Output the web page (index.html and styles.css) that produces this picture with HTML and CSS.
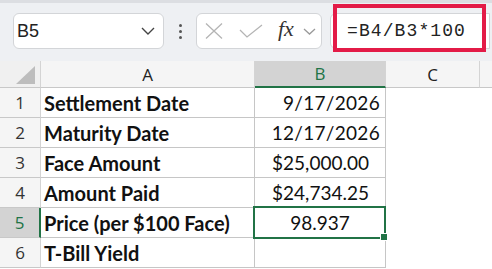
FILE: index.html
```html
<!DOCTYPE html>
<html lang="en">
<head>
    <meta charset="UTF-8">
    <meta name="viewport" content="width=device-width, initial-scale=1.0">
    <link rel="stylesheet" href="styles.css">
    <title>T-Bill Price</title>
</head>
<body>
<div class="formula-bar">
    <div class="name-box">
        <span class="name-box_text">B5</span>
        <svg class="chevron" width="14" height="8" viewBox="0 0 14 8"><path d="M1 1 L7 7 L13 1" fill="none" stroke="#444" stroke-width="1.4"/></svg>
    </div>
    <div class="dots"><span></span><span></span><span></span></div>
    <div class="fx-box">
        <svg class="icon-x" width="18" height="16" viewBox="0 0 18 16"><path d="M1 0.5 L17 15.5 M17 0.5 L1 15.5" fill="none" stroke="#b4b4b4" stroke-width="1.3"/></svg>
        <svg class="icon-check" width="24" height="14" viewBox="0 0 24 14"><path d="M1 6 L8 13 L23 1" fill="none" stroke="#b4b4b4" stroke-width="1.3"/></svg>
        <span class="fx">fx</span>
        <svg class="chevron-small" width="13" height="7" viewBox="0 0 13 7"><path d="M1 1 L6.5 6 L12 1" fill="none" stroke="#9a9a9a" stroke-width="1.3"/></svg>
    </div>
    <div class="formula-box">
        <span class="formula">=B4/B3*100</span>
    </div>
    <div class="highlight"></div>
</div>

<div class="sheet">
    <div class="hd corner"><span class="corner-tri"></span></div>
    <div class="hd col">A</div>
    <div class="hd col col-active">B</div>
    <div class="hd col">C</div>
    <div class="hd col col-last"></div>

    <div class="hd row">1</div>
    <div class="cell label">Settlement Date</div>
    <div class="cell num date">9/17/2026</div>
    <div class="blank"></div>

    <div class="hd row">2</div>
    <div class="cell label">Maturity Date</div>
    <div class="cell num date">12/17/2026</div>
    <div class="blank"></div>

    <div class="hd row">3</div>
    <div class="cell label">Face Amount</div>
    <div class="cell num money">$25,000.00</div>
    <div class="blank"></div>

    <div class="hd row">4</div>
    <div class="cell label">Amount Paid</div>
    <div class="cell num money">$24,734.25</div>
    <div class="blank"></div>

    <div class="hd row row-active">5</div>
    <div class="cell label">Price (per $100 Face)</div>
    <div class="cell num center selected">98.937<span class="sel-box"></span><span class="fill-handle"></span></div>
    <div class="blank"></div>

    <div class="hd row">6</div>
    <div class="cell label">T-Bill Yield</div>
    <div class="cell num"></div>
    <div class="blank"></div>
</div>
</body>
</html>
```

FILE: styles.css
```css
body, html {
    margin: 0;
    padding: 0;
    width: 492px;
    height: 269px;
    overflow: hidden;
    background: #ffffff;
}

.formula-bar {
    position: relative;
    display: flex;
    align-items: flex-start;
    height: 61px;
    box-sizing: border-box;
    padding: 10px 0 0 13px;
    background: #eef0f3;
    border-top: 3px solid #dcdee2;
}

.name-box {
    display: flex;
    align-items: center;
    justify-content: space-between;
    width: 151px;
    height: 36px;
    box-sizing: border-box;
    padding: 0 8px 0 3px;
    background: #fff;
    border: 1px solid #d3d5d8;
    border-radius: 6px;
}

.name-box_text {
    font-family: "Liberation Sans", Arial, sans-serif;
    font-size: 18px;
    color: #222;
}

.dots {
    display: flex;
    flex-direction: column;
    gap: 3px;
    margin: 11px 0 0 15px;
    width: 17px;
}

.dots span {
    width: 3px;
    height: 3px;
    border-radius: 50%;
    background: #555;
}

.fx-box {
    display: flex;
    align-items: center;
    width: 126px;
    height: 36px;
    box-sizing: border-box;
    padding-left: 8px;
    background: #fff;
    border: 1px solid #d3d5d8;
    border-radius: 6px;
}

.icon-check {
    margin-left: 16px;
}

.fx {
    margin-left: 15px;
    margin-top: -4px;
    font-family: "Liberation Serif", "Times New Roman", serif;
    font-style: italic;
    font-size: 22px;
    color: #333;
    line-height: 1;
}

.chevron-small {
    margin-left: 9px;
}

.formula-box {
    display: flex;
    align-items: center;
    width: 160px;
    height: 36px;
    margin-left: 8px;
    box-sizing: border-box;
    padding-left: 16px;
    background: #fff;
    border: 1px solid #d3d5d8;
    border-radius: 6px 0 0 6px;
}

.formula {
    font-family: "Liberation Mono", "Courier New", monospace;
    font-size: 18px;
    letter-spacing: 1.1px;
    color: #222;
}

.highlight {
    position: absolute;
    left: 333px;
    top: 1px;
    width: 153px;
    height: 48px;
    box-sizing: border-box;
    border: 4px solid #e31b47;
}

.sheet {
    display: grid;
    grid-template-columns: 41px 214px 131px 94px 1fr;
    grid-template-rows: 27px repeat(6, 30px);
    font-family: Lato, "Open Sans", sans-serif;
}

.hd {
    display: flex;
    align-items: center;
    justify-content: center;
    box-sizing: border-box;
    background: #f5f5f5;
    border-right: 1px solid #d4d4d4;
    border-bottom: 1px solid #c8c8c8;
    font-family: "Open Sans", "Liberation Sans", sans-serif;
    font-size: 17px;
    color: #222;
}

.corner {
    position: relative;
    background: #f0f0f0;
}

.corner-tri {
    position: absolute;
    right: 5px;
    bottom: 3px;
    width: 0;
    height: 0;
    border-left: 19px solid transparent;
    border-bottom: 18px solid #bdbdbd;
}

.col-last {
    border-right: none;
}

.col-active {
    background: #d3d3d3;
    color: #217346;
    border-bottom: 2px solid #217346;
}

.row {
    color: #333;
}

.row-active {
    background: #d3d3d3;
    color: #217346;
    border-right: 2px solid #217346;
}

.cell {
    display: flex;
    align-items: center;
    box-sizing: border-box;
    border-right: 1px solid #c6c6c6;
    border-bottom: 1px solid #c6c6c6;
    font-size: 19px;
    color: #111;
    white-space: nowrap;
}

.label {
    padding-left: 3px;
    font-weight: bold;
    font-size: 20px;
}

.num {
    justify-content: flex-end;
    padding-right: 5px;
}

.date {
    letter-spacing: 0.3px;
}

.money {
    padding-right: 16px;
}

.center {
    justify-content: center;
    padding-right: 0;
}

.blank {
    grid-column: span 2;
}

.selected {
    position: relative;
}

.sel-box {
    position: absolute;
    left: -2px;
    top: -2px;
    right: -1px;
    bottom: -2px;
    border: 2px solid #217346;
}

.fill-handle {
    position: absolute;
    right: -3px;
    bottom: -4px;
    width: 6px;
    height: 6px;
    background: #217346;
    border: 1px solid #fff;
}
```
